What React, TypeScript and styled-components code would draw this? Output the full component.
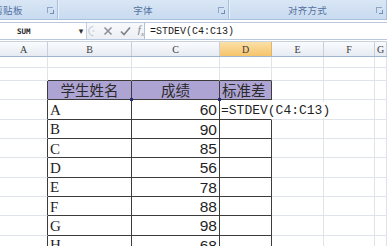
import React from "react";
import styled, { createGlobalStyle } from "styled-components";

const GlobalStyle = createGlobalStyle`
  html, body {
    margin: 0;
    padding: 0;
    background: #ffffff;
    overflow: hidden;
  }
  body {
    width: 387px;
    height: 251px;
  }
`;

const COLS = ["A", "B", "C", "D", "E", "F", "G"];
const COL_WIDTHS = [48, 84, 88, 52, 52, 51, 12];
const TABLE_TOP = 2;
const TABLE_COLS = [1, 2, 3];

const students = [
  { name: "A", score: 60 },
  { name: "B", score: 90 },
  { name: "C", score: 85 },
  { name: "D", score: 56 },
  { name: "E", score: 78 },
  { name: "F", score: 88 },
  { name: "G", score: 98 },
  { name: "H", score: 68 },
];

const ROW_HEIGHTS = [11, 13, ...Array(students.length + 1).fill(19.35)];

type CellData = { text?: string; kind?: "head" | "name" | "score" | "edit" };

function cellAt(r: number, c: number): CellData {
  if (r === TABLE_TOP) {
    if (c === 1) return { text: "学生姓名", kind: "head" };
    if (c === 2) return { text: "成绩", kind: "head" };
    if (c === 3) return { text: "标准差", kind: "head" };
  }
  const i = r - TABLE_TOP - 1;
  if (i >= 0 && i < students.length) {
    if (c === 1) return { text: students[i].name, kind: "name" };
    if (c === 2) return { text: String(students[i].score), kind: "score" };
    if (c === 3 && i === 0) return { text: "=STDEV(C4:C13)", kind: "edit" };
  }
  return {};
}

const inTable = (r: number, c: number) => r >= TABLE_TOP && TABLE_COLS.includes(c);

export default function App() {
  return (
    <>
      <GlobalStyle />
      <Window>
        <Ribbon>
          <Group $width={98} $shift={-41}>
            <GroupLabel>剪贴板</GroupLabel>
            <Launcher />
          </Group>
          <Group $width={170}>
            <GroupLabel>字体</GroupLabel>
            <Launcher />
          </Group>
          <Group $width={157}>
            <GroupLabel>对齐方式</GroupLabel>
            <Launcher />
          </Group>
        </Ribbon>

        <FormulaBar>
          <NameBox>SUM</NameBox>
          <DropArrow>▾</DropArrow>
          <BarTools>
            <svg width="10" height="14" viewBox="0 0 10 14">
              <path d="M7 1 A6 6 0 0 0 7 13" fill="none" stroke="#c9ced6" strokeWidth="1.6" />
              <circle cx="7" cy="7" r="1.4" fill="#d4d8de" />
            </svg>
            <ToolIcon>
              <svg width="10" height="10" viewBox="0 0 10 10">
                <path d="M1.5 1.5 L8.5 8.5 M8.5 1.5 L1.5 8.5" stroke="#8c9099" strokeWidth="1.6" />
              </svg>
            </ToolIcon>
            <ToolIcon>
              <svg width="11" height="10" viewBox="0 0 11 10">
                <path d="M1 5.5 L4 8.5 L10 1.5" fill="none" stroke="#7f858e" strokeWidth="1.7" />
              </svg>
            </ToolIcon>
            <Fx>
              f<sub>x</sub>
            </Fx>
          </BarTools>
          <FormulaInput>=STDEV(C4:C13)</FormulaInput>
        </FormulaBar>

        <HeaderRow>
          {COLS.map((c, i) => (
            <ColHeader key={c} $width={COL_WIDTHS[i]} $active={c === "D"}>
              {c}
            </ColHeader>
          ))}
        </HeaderRow>

        <Sheet>
          {ROW_HEIGHTS.map((h, r) => (
            <Row key={r} style={{ height: h }}>
              {COLS.map((_, c) => {
                const d = cellAt(r, c);
                const editing = d.kind === "edit";
                const darkRight =
                  !editing && (inTable(r, c) || inTable(r, c + 1)) && !(r === TABLE_TOP + 1 && c === 3);
                const darkBottom = inTable(r, c) || inTable(r + 1, c);
                return (
                  <Cell
                    key={c}
                    $width={COL_WIDTHS[c]}
                    $head={d.kind === "head"}
                    $align={d.kind === "score" ? "right" : d.kind === "head" && c !== 3 ? "center" : "left"}
                    $darkRight={darkRight}
                    $darkBottom={darkBottom}
                    $noRight={editing}
                    $editing={editing}
                  >
                    {d.kind === "head" && <HeadText>{d.text}</HeadText>}
                    {d.kind === "name" && <NameText>{d.text}</NameText>}
                    {d.kind === "score" && <ScoreText>{d.text}</ScoreText>}
                    {editing && <EditText>{d.text}</EditText>}
                    {r === TABLE_TOP + 1 && (c === 2 || c === 3) && <RefHandle />}
                  </Cell>
                );
              })}
            </Row>
          ))}
        </Sheet>
      </Window>
    </>
  );
}

const Window = styled.div`
  width: 387px;
  height: 251px;
  display: flex;
  flex-direction: column;
  background: #ffffff;
  overflow: hidden;
`;

const Ribbon = styled.div`
  display: flex;
  height: 19px;
  flex-shrink: 0;
  background: linear-gradient(#d9e6f5, #c9dbf0);
  border-bottom: 1px solid #a9c1e0;
`;

const Group = styled.div<{ $width: number; $shift?: number }>`
  position: relative;
  flex-shrink: 0;
  width: ${(p) => p.$width}px;
  margin-left: ${(p) => p.$shift ?? 0}px;
  display: flex;
  align-items: center;
  justify-content: center;
  border-right: 1px solid #a6bedf;
  box-shadow: 1px 0 0 #e8f0fa;
`;

const GroupLabel = styled.span`
  font-family: "Noto Sans CJK SC", sans-serif;
  font-size: 9.5px;
  color: #5271a0;
  letter-spacing: 0.3px;
`;

const Launcher = styled.span`
  position: absolute;
  right: 4px;
  top: 7px;
  width: 5px;
  height: 5px;
  border-left: 1px solid #8ea6c6;
  border-top: 1px solid #8ea6c6;
  &::after {
    content: "";
    position: absolute;
    left: 2px;
    top: 2px;
    width: 3px;
    height: 3px;
    border-right: 1px solid #6f8db5;
    border-bottom: 1px solid #6f8db5;
  }
`;

const FormulaBar = styled.div`
  display: flex;
  align-items: stretch;
  height: 16px;
  flex-shrink: 0;
  margin-top: 2px;
  background: #eef2f7;
  border-top: 1px solid #b7c8df;
  border-bottom: 1px solid #b7c8df;
`;

const NameBox = styled.div`
  width: 59px;
  padding-left: 17px;
  display: flex;
  align-items: center;
  background: #ffffff;
  font-family: "DejaVu Sans Mono", monospace;
  font-weight: bold;
  font-size: 7.5px;
  color: #222;
`;

const DropArrow = styled.div`
  width: 10px;
  display: flex;
  align-items: center;
  justify-content: center;
  background: #ffffff;
  font-family: "DejaVu Sans", sans-serif;
  font-size: 9px;
  color: #333;
  border-right: 1px solid #c3cfdf;
`;

const BarTools = styled.div`
  width: 56px;
  display: flex;
  align-items: center;
  gap: 4px;
  padding-left: 1px;
  background: linear-gradient(#f8f9fb, #eceff4);
`;

const ToolIcon = styled.span`
  display: flex;
  align-items: center;
  margin-left: 3px;
`;

const Fx = styled.span`
  margin-left: 3px;
  font-family: "Liberation Serif", serif;
  font-style: italic;
  font-size: 11px;
  color: #7d838c;
  sub {
    font-size: 7px;
  }
`;

const FormulaInput = styled.div`
  flex: 1;
  display: flex;
  align-items: center;
  padding-left: 5px;
  background: #ffffff;
  border-left: 1px solid #b3c3d9;
  font-family: "Liberation Mono", monospace;
  font-size: 10px;
  color: #1a1a1a;
`;

const HeaderRow = styled.div`
  display: flex;
  height: 14px;
  flex-shrink: 0;
  margin-top: 1px;
  border-top: 1px solid #c9d3e0;
  border-bottom: 1px solid #9eb6ce;
`;

const ColHeader = styled.div<{ $width: number; $active: boolean }>`
  flex-shrink: 0;
  box-sizing: border-box;
  width: ${(p) => p.$width}px;
  display: flex;
  align-items: center;
  justify-content: center;
  font-family: "Liberation Serif", serif;
  font-size: 10px;
  color: #3b3b3b;
  border-right: 1px solid ${(p) => (p.$active ? "#e2b45c" : "#c6d0dc")};
  background: ${(p) =>
    p.$active ? "linear-gradient(#fbe0a8, #f5c46a)" : "linear-gradient(#fafbfd, #e6ebf2)"};
`;

const Sheet = styled.div`
  height: 189px;
  flex-shrink: 0;
  overflow: hidden;
`;

const Row = styled.div`
  display: flex;
`;

const Cell = styled.div<{
  $width: number;
  $head: boolean;
  $align: "left" | "right" | "center";
  $darkRight: boolean;
  $darkBottom: boolean;
  $noRight: boolean;
  $editing: boolean;
}>`
  position: relative;
  flex-shrink: 0;
  box-sizing: border-box;
  width: ${(p) => p.$width}px;
  display: flex;
  align-items: center;
  justify-content: ${(p) =>
    p.$align === "right" ? "flex-end" : p.$align === "center" ? "center" : "flex-start"};
  padding: 0 2px;
  background: ${(p) => (p.$head ? "#aea4d4" : "#ffffff")};
  border-right: 1px solid
    ${(p) => (p.$noRight ? "transparent" : p.$darkRight ? "#3c3c3c" : "#dfe3ea")};
  border-bottom: ${(p) => (p.$darkBottom ? "1.5px solid #3c3c3c" : "1px solid #dfe3ea")};
  z-index: ${(p) => (p.$editing ? 2 : "auto")};
`;

const HeadText = styled.span`
  font-family: "Noto Sans CJK SC", sans-serif;
  font-size: 14.5px;
  color: #2a2a2a;
  line-height: 1;
`;

const NameText = styled.span`
  font-family: "Liberation Serif", serif;
  font-size: 15px;
  color: #1f1f1f;
  line-height: 1;
  margin-top: 2px;
`;

const ScoreText = styled.span`
  font-family: "Liberation Sans", sans-serif;
  font-size: 15.5px;
  color: #1f1f1f;
  line-height: 1;
  margin-top: 1px;
`;

const EditText = styled.span`
  white-space: nowrap;
  background: #ffffff;
  margin-left: -1px;
  padding: 2px 3px 1px 0;
  font-family: "Liberation Mono", monospace;
  font-size: 13px;
  color: #1f1f1f;
  line-height: 1;
`;

const RefHandle = styled.span`
  position: absolute;
  left: -2px;
  top: -2px;
  width: 3px;
  height: 3px;
  background: #2a2a7a;
`;
